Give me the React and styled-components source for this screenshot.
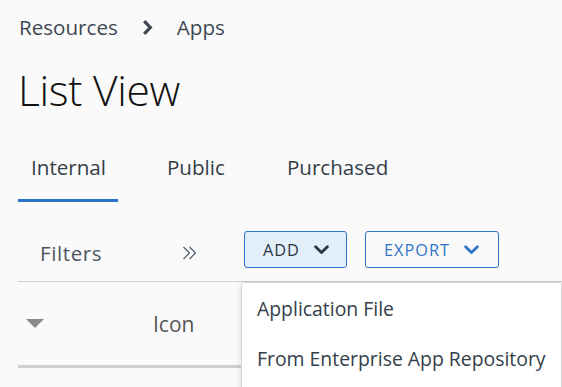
import React from "react";
import styled, { createGlobalStyle } from "styled-components";

const Global = createGlobalStyle`
  html, body { margin: 0; padding: 0; background: #fafafa; }
  body { font-family: "Open Sans", "Liberation Sans", sans-serif; overflow: hidden; }
  * { box-sizing: border-box; }
`;

const Page = styled.div`
  width: 562px;
  height: 387px;
  padding: 13px 0 0 18px;
  overflow: hidden;
  position: relative;
`;

const Breadcrumb = styled.nav`
  display: flex;
  align-items: center;
  gap: 24px;
  height: 28px;
  padding-left: 1px;
  font-size: 20.6px;
  color: #3d4752;
`;

const Crumb = styled.span``;

const Title = styled.h1`
  margin: 24px 0 0 0;
  font-size: 42.5px;
  font-weight: 300;
  line-height: 50px;
  color: #111;
  letter-spacing: -0.3px;
`;

const Tabs = styled.div`
  display: flex;
  gap: 36px;
  margin-top: 30px;
`;

const Tab = styled.div`
  padding: 0 ${(p) => (p.$active ? 12 : 13)}px 11px 13px;
  height: 57px;
  display: flex;
  align-items: center;
  font-size: 20.6px;
  font-weight: ${(p) => (p.$active ? 500 : 400)};
  color: #333e49;
  border-bottom: 3px solid ${(p) => (p.$active ? "#2b71c8" : "transparent")};
`;

const Toolbar = styled.div`
  display: flex;
  align-items: center;
  height: 79px;
  padding: 16px 0 0 22px;
`;

const FiltersLabel = styled.span`
  font-size: 20.5px;
  letter-spacing: 0.6px;
  color: #4b5661;
  width: 142px;
  padding-top: 7px;
`;

const Collapse = styled.span`
  display: flex;
  width: 62px;
  align-items: center;
  padding-top: 6px;
`;

const Button = styled.button`
  height: 37px;
  padding: 0 0 0 18px;
  display: flex;
  align-items: center;
  gap: 14px;
  border: 1px solid #2f74c8;
  border-radius: 3px;
  background: ${(p) => (p.$active ? "#e3eff8" : "transparent")};
  color: ${(p) => (p.$active ? "#2a3544" : "#2f74c8")};
  font-family: inherit;
  font-size: 16.3px;
  letter-spacing: 1px;
  width: ${(p) => p.$w}px;
  margin-right: 18px;
`;

const ButtonWrap = styled.div`
  position: relative;
`;

const Menu = styled.div`
  position: absolute;
  left: -3px;
  top: 51px;
  width: 321px;
  background: #fff;
  border: 1px solid #d6d6d6;
  border-radius: 3px;
  box-shadow: 0 2px 6px rgba(0, 0, 0, 0.12);
  padding: 0 0 12px;
  z-index: 5;
`;

const MenuItem = styled.div`
  height: 50px;
  display: flex;
  align-items: center;
  padding-left: 15px;
  font-size: 19.4px;
  color: #333e49;
  white-space: nowrap;
`;

const Table = styled.div`
  border-top: 1px solid #c9d0d6;
`;

const HeaderRow = styled.div`
  display: flex;
  align-items: center;
  height: 86px;
  border-bottom: 3px solid #cfcfcf;
`;

const SortCell = styled.div`
  width: 135px;
  padding-left: 8px;
  display: flex;
  align-items: center;
`;

const HeaderCell = styled.div`
  font-size: 21px;
  color: #555;
`;

const Chevron = ({ color, size = 15 }) => (
  <svg width={size} height={size * 0.65} viewBox="0 0 14 9" fill="none">
    <path d="M1.5 1.5 L7 7 L12.5 1.5" stroke={color} strokeWidth="2.6" strokeLinecap="round" strokeLinejoin="round" />
  </svg>
);

export default function App() {
  return (
    <>
      <Global />
      <Page>
        <Breadcrumb>
          <Crumb>Resources</Crumb>
          <svg width="11" height="17" viewBox="0 0 11 17">
            <path d="M2.2 2.2 L8.3 8.5 L2.2 14.8" stroke="#3d4752" strokeWidth="3.2" fill="none" strokeLinejoin="miter" />
          </svg>
          <Crumb>Apps</Crumb>
        </Breadcrumb>
        <Title>List View</Title>
        <Tabs>
          <Tab $active>Internal</Tab>
          <Tab>Public</Tab>
          <Tab>Purchased</Tab>
        </Tabs>
        <Toolbar>
          <FiltersLabel>Filters</FiltersLabel>
          <Collapse>
            <svg width="16" height="14" viewBox="0 0 16 14">
              <path d="M1.5 1 L7.5 7 L1.5 13 M7.5 1 L13.5 7 L7.5 13" stroke="#56616c" strokeWidth="1.3" fill="none" />
            </svg>
          </Collapse>
          <ButtonWrap>
            <Button $active $w={103}>
              ADD <Chevron color="#2a3544" />
            </Button>
            <Menu>
              <MenuItem>Application File</MenuItem>
              <MenuItem>From Enterprise App Repository</MenuItem>
            </Menu>
          </ButtonWrap>
          <Button $w={134}>
            EXPORT <Chevron color="#2f74c8" />
          </Button>
        </Toolbar>
        <Table>
          <HeaderRow>
            <SortCell>
              <svg width="18" height="9" viewBox="0 0 18 9">
                <path d="M0 0 H18 L9 9 Z" fill="#8a8a8a" />
              </svg>
            </SortCell>
            <HeaderCell>Icon</HeaderCell>
          </HeaderRow>
        </Table>
      </Page>
    </>
  );
}
